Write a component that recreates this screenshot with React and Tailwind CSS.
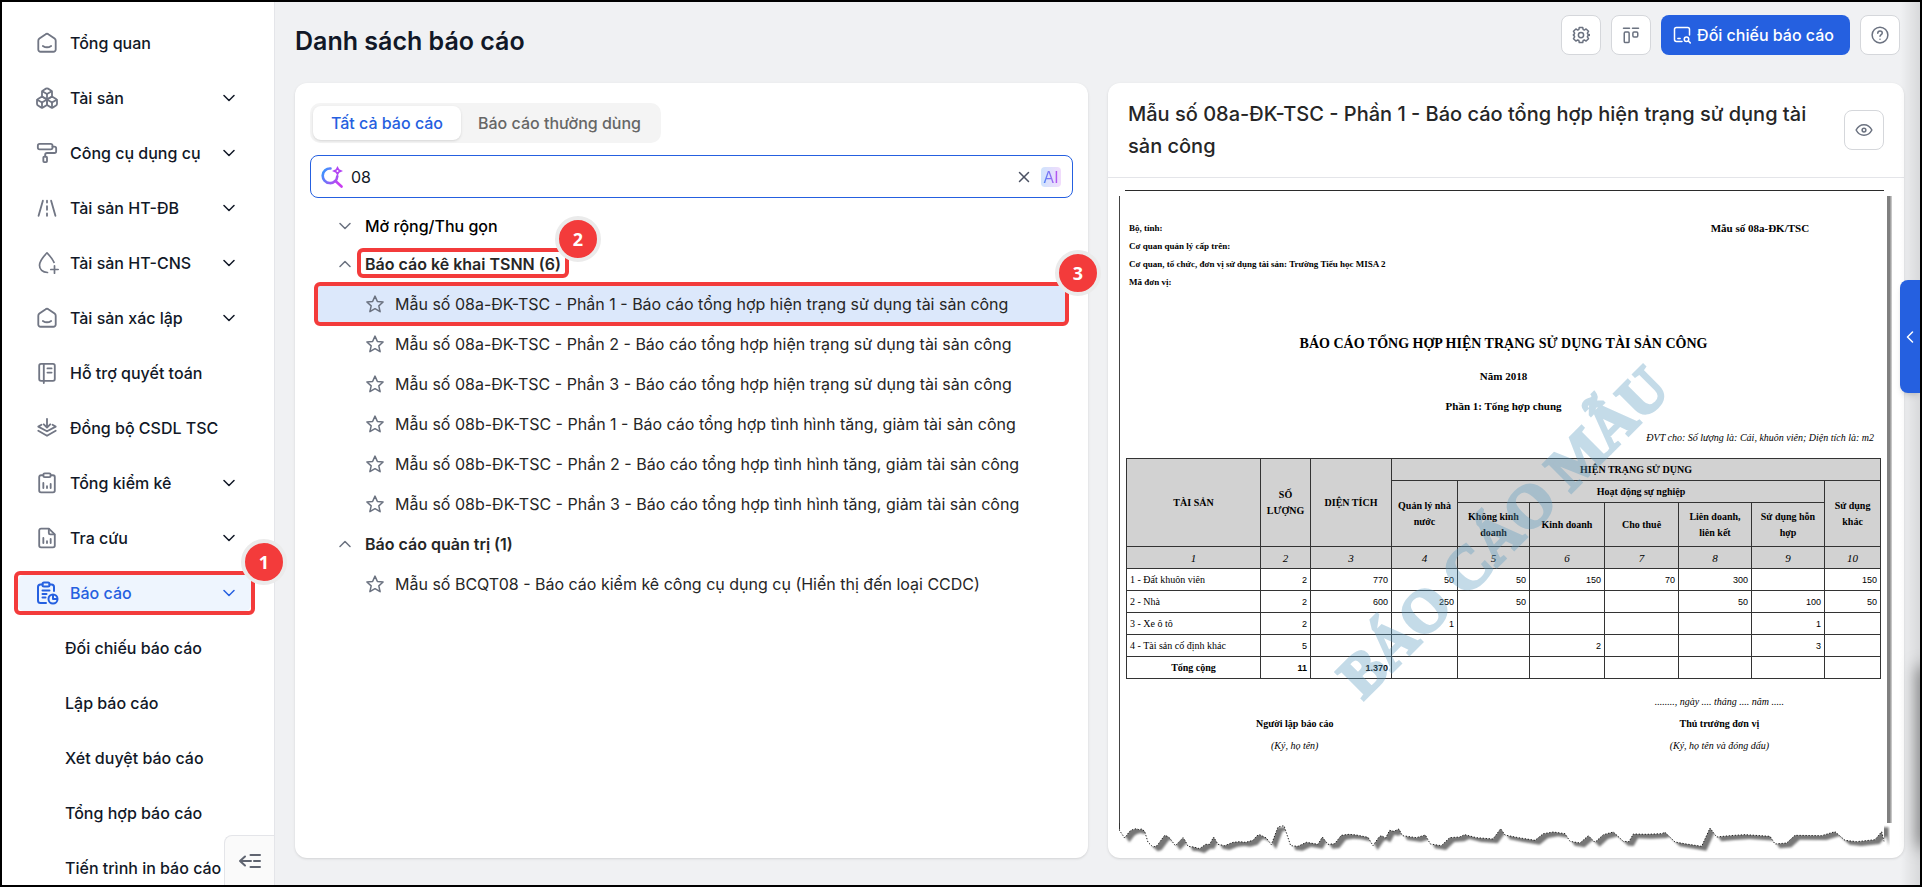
import { useState } from "react";
import { Boxes, PaintRoller, X } from "lucide-react";

const Icon = ({ size = 22, width = 1.7, children }) => (
  <svg
    width={size}
    height={size}
    viewBox="0 0 24 24"
    fill="none"
    stroke="currentColor"
    strokeWidth={width}
    strokeLinecap="round"
    strokeLinejoin="round"
    className="shrink-0"
    aria-hidden="true"
  >
    {children}
  </svg>
);

const HomeIcon = () => (
  <Icon width={2}>
    <path d="M2.5 9.6c0-1 .4-1.800 1.200-2.400l6.500-4.600a3 3 0 0 1 3.600 0l6.500 4.600c.8.600 1.200 1.400 1.200 2.400V19a2.500 2.500 0 0 1-2.500 2.500h-14A2.500 2.500 0 0 1 2.500 19z" />
    <path d="M7.500 15.200c2.600 1.700 6.400 1.700 9 0" />
  </Icon>
);

const RoadIcon = () => (
  <Icon width={2}>
    <path d="M7.500 4 2.800 20.500M16.500 4l4.700 16.500" />
    <path d="M12 4v2M12 10v4M12 18v2.500" />
  </Icon>
);

const DropPlusIcon = () => (
  <Icon size={24}>
    <path d="M12.500 21.500c-5 0-8-3-8-7.200C4.500 9.500 8.500 5.500 12 1.800c2.800 3 5.500 6 7 9.500" />
    <path d="M19.500 14.800v7.400M15.800 18.500h7.400" />
  </Icon>
);

const BookIcon = () => (
  <Icon width={2}>
    <rect x="3.500" y="2" width="17" height="18.500" rx="2" />
    <path d="M8.500 2v21M12.500 7h4.500M12.500 11.500h4.500" />
  </Icon>
);

const LayersDownIcon = () => (
  <Icon width={2}>
    <path d="M12 2v9M8.500 8l3.500 3.500L15.500 8" />
    <path d="M6 8.500 2.500 10.500 12 15.500l9.500-5L18 8.500" />
    <path d="M2.500 15l9.500 5.500 9.500-5.500" />
  </Icon>
);

const ClipboardChartIcon = () => (
  <Icon width={2}>
    <path d="M8 3.500H5.500a2 2 0 0 0-2 2v14.800a2 2 0 0 0 2 2h13a2 2 0 0 0 2-2V5.500a2 2 0 0 0-2-2H16" />
    <rect x="8" y="1.500" width="8" height="4" rx="1.500" />
    <path d="M8 12v5.500M12 15.500v2M16 13v4.500" />
  </Icon>
);

const FileChartIcon = () => (
  <Icon width={2}>
    <path d="M14 1.800H5.500a2 2 0 0 0-2 2v16.500a2 2 0 0 0 2 2h13a2 2 0 0 0 2-2V8z" />
    <path d="M14 2v4.500A1.500 1.500 0 0 0 15.500 8h4.500" />
    <path d="M8 12v5.500M12 15.500v2M16 13v4.500" />
  </Icon>
);

const ClipboardPieIcon = () => (
  <Icon size={24} width={2}>
    <path d="M7.500 3.500h-2a2.500 2.500 0 0 0-2.500 2.500v13.500A2.500 2.500 0 0 0 5.500 22H11M14.500 3.500h2A2.500 2.500 0 0 1 19 6v4" />
    <rect x="7.500" y="1.500" width="7" height="4" rx="1.500" />
    <path d="M7.500 9.500h7M7.500 13h4M7.500 16.500h3" />
    <circle cx="18" cy="18" r="4.500" />
    <path d="M18 14v4h4" />
  </Icon>
);

const Chevron = ({ up, className = "" }) => (
  <svg
    width="12"
    height="8"
    viewBox="0 0 12 8"
    fill="none"
    stroke="currentColor"
    strokeWidth="1.500"
    strokeLinecap="round"
    strokeLinejoin="round"
    className={`shrink-0 ${className}`}
    aria-hidden="true"
  >
    <path d={up ? "M1 6.500 6 1.500l5 5" : "M1 1.500l5 5 5-5"} />
  </svg>
);

const StarIcon = () => (
  <svg
    width="18"
    height="18"
    viewBox="0 0 24 24"
    fill="none"
    stroke="currentColor"
    strokeWidth="2"
    strokeLinejoin="round"
    className="shrink-0 text-[#6b7280]"
    aria-hidden="true"
  >
    <path d="M12 1.500 15.200 8.700 22.800 9.400 17.100 14.500 18.800 22.300 12 18.200 5.200 22.300 6.900 14.500 1.200 9.400 8.800 8.700z" />
  </svg>
);

const menu = [
  { label: "Tổng quan", icon: <HomeIcon /> },
  {
    label: "Tài sản",
    icon: <Boxes size={24} strokeWidth={1.8} className="-mx-px shrink-0" />,
    more: true,
  },
  {
    label: "Công cụ dụng cụ",
    icon: <PaintRoller size={22} strokeWidth={2} className="shrink-0" />,
    more: true,
  },
  { label: "Tài sản HT-ĐB", icon: <RoadIcon />, more: true },
  { label: "Tài sản HT-CNS", icon: <DropPlusIcon />, more: true },
  { label: "Tài sản xác lập", icon: <HomeIcon />, more: true },
  { label: "Hỗ trợ quyết toán", icon: <BookIcon /> },
  { label: "Đồng bộ CSDL TSC", icon: <LayersDownIcon /> },
  { label: "Tổng kiểm kê", icon: <ClipboardChartIcon />, more: true },
  { label: "Tra cứu", icon: <FileChartIcon />, more: true },
  { label: "Báo cáo", icon: <ClipboardPieIcon />, more: true, active: true },
];

const subMenu = [
  "Đối chiếu báo cáo",
  "Lập báo cáo",
  "Xét duyệt báo cáo",
  "Tổng hợp báo cáo",
  "Tiến trình in báo cáo",
];

const groups = [
  {
    title: "Báo cáo kê khai TSNN (6)",
    step: 2,
    reports: [
      "Mẫu số 08a-ĐK-TSC - Phần 1 - Báo cáo tổng hợp hiện trạng sử dụng tài sản công",
      "Mẫu số 08a-ĐK-TSC - Phần 2 - Báo cáo tổng hợp hiện trạng sử dụng tài sản công",
      "Mẫu số 08a-ĐK-TSC - Phần 3 - Báo cáo tổng hợp hiện trạng sử dụng tài sản công",
      "Mẫu số 08b-ĐK-TSC - Phần 1 - Báo cáo tổng hợp tình hình tăng, giảm tài sản công",
      "Mẫu số 08b-ĐK-TSC - Phần 2 - Báo cáo tổng hợp tình hình tăng, giảm tài sản công",
      "Mẫu số 08b-ĐK-TSC - Phần 3 - Báo cáo tổng hợp tình hình tăng, giảm tài sản công",
    ],
  },
  {
    title: "Báo cáo quản trị (1)",
    reports: [
      "Mẫu số BCQT08 - Báo cáo kiểm kê công cụ dụng cụ (Hiển thị đến loại CCDC)",
    ],
  },
];

const rows = [
  ["1 - Đất khuôn viên", "2", "770", "50", "50", "150", "70", "300", "", "150"],
  ["2 - Nhà", "2", "600", "250", "50", "", "", "50", "100", "50"],
  ["3 - Xe ô tô", "2", "", "1", "", "", "", "", "1", ""],
  ["4 - Tài sản cố định khác", "5", "", "", "", "2", "", "", "3", ""],
];

// Numbered marker: red outline with a round badge on its top right corner
const Step = ({ n, className }) => (
  <span
    className={`pointer-events-none absolute z-20 rounded-md border-4 border-[#f33b3b] ${className}`}
  >
    <span className="absolute -top-9 -right-9 flex size-[46px] items-center justify-center rounded-full border-4 border-[#ebebeb] bg-[#f33b3b] font-['Open_Sans',sans-serif] text-lg font-bold text-white">
      {n}
    </span>
  </span>
);

const Sidebar = () => (
  <aside className="relative z-10 w-[273px] shrink-0 border-r border-[#e4e5e9] bg-white">
    <nav className="pt-[13px] pr-[23px] pl-4">
      <ul>
        {menu.map((item) => (
          <li key={item.label} className="flex h-[55px] items-center">
            <button
              className={`relative flex h-9 w-full items-center rounded-md pr-4 pl-[18px] text-left font-medium ${
                item.active ? "bg-[#eef5fe] text-[#2560e0]" : ""
              }`}
            >
              <span
                className={`flex w-[22px] justify-center ${
                  item.active ? "" : "text-[#717684]"
                }`}
              >
                {item.icon}
              </span>
              <span className="ml-3 flex-1 whitespace-nowrap">
                {item.label}
              </span>
              {item.more && <Chevron />}
              {item.active && <Step n={1} className="-inset-1" />}
            </button>
          </li>
        ))}
        {subMenu.map((label) => (
          <li key={label} className="flex h-[55px] items-center">
            <a href="#" className="pl-[47px] font-medium whitespace-nowrap">
              {label}
            </a>
          </li>
        ))}
      </ul>
    </nav>
    <button
      aria-label="Thu gọn menu"
      className="absolute right-0 bottom-0 flex size-[50px] items-center justify-center rounded-tl-lg border-t border-l border-[#e4e5e9] bg-[#fafafa] text-[#5f6470]"
    >
      <Icon size={24} width={2}>
        <path d="M7 7.500 2 12l5 4.500M2 12h11" />
        <path d="M12.500 6h9.500M16 12h6M12.500 18h9.500" />
      </Icon>
    </button>
  </aside>
);

const IconButton = ({ label, children }) => (
  <button
    aria-label={label}
    className="flex size-10 shrink-0 items-center justify-center rounded-lg border border-[#d5d7db] bg-white text-[#6b7280]"
  >
    {children}
  </button>
);

const Header = () => (
  <header className="flex h-[81px] items-start justify-between pt-[13px] pr-1">
    <h1 className="text-[25px] leading-[52px] font-semibold">
      Danh sách báo cáo
    </h1>
    <div className="flex gap-[10px]">
      <IconButton label="Thiết lập">
        <Icon size={18} width={2}>
          <path d="M9.700 2h4.600l.6 2.800 1.500.6 2.400-1.500 3.200 3.200-1.500 2.400.6 1.500 2.800.6v.8l-2.800.6-.6 1.500 1.500 2.400-3.200 3.200-2.400-1.500-1.500.6-.6 2.800H9.700l-.6-2.800-1.500-.6-2.400 1.500L2 16.900l1.500-2.400-.6-1.500-1-.6v-.8l1-.6.6-1.500L2 7.100l3.200-3.200 2.400 1.500 1.500-.6z" />
          <circle cx="12" cy="12" r="3.500" />
        </Icon>
      </IconButton>
      <IconButton label="Bố cục">
        <Icon size={18} width={2}>
          <path d="M2 3h8M14 3h8" />
          <rect x="3" y="8" width="6.500" height="14" rx="1.500" />
          <rect x="14.500" y="8" width="6.500" height="6.500" rx="1.500" />
        </Icon>
      </IconButton>
      <button className="flex h-10 items-center gap-1.5 rounded-lg bg-[#2560e0] pr-4 pl-3 font-medium text-white">
        <Icon size={18} width={2}>
          <path d="M12 20.500H4.500a2.500 2.500 0 0 1-2.500-2.500V4.500A2.500 2.500 0 0 1 4.500 2h15A2.500 2.500 0 0 1 22 4.500V12M6.500 16.500h3" />
          <circle cx="18" cy="17.500" r="3" />
          <path d="m20.500 20 2.500 2.500" />
        </Icon>
        Đối chiếu báo cáo
      </button>
      <IconButton label="Trợ giúp">
        <Icon size={18} width={2}>
          <circle cx="12" cy="12" r="10.500" />
          <path d="M9 9.500c0-2 1.300-3 3-3s3 1.100 3 2.700c0 2.200-3 2.200-3 4.600M12 17.500v.1" />
        </Icon>
      </IconButton>
    </div>
  </header>
);

const SearchBox = ({ value, onChange }) => (
  <div className="mt-3 flex h-[43px] items-center rounded-lg border border-[#2560e0] pr-[11px] pl-[10px]">
    <svg width="22" height="22" viewBox="0 0 22 22" fill="none" aria-hidden="true">
      <defs>
        <linearGradient id="searchStroke" x1="0" y1="0" x2="1" y2="0.600">
          <stop offset="0" stopColor="#2f9bff" />
          <stop offset="1" stopColor="#c93df0" />
        </linearGradient>
      </defs>
      <path
        d="M9.500 2.500a7.300 7.300 0 1 0 6.800 7.700M14.500 15l6 5.500"
        stroke="url(#searchStroke)"
        strokeWidth="2.600"
        strokeLinecap="round"
      />
      <path
        d="M16.500 0 18.200 3.300l3.800 1.700-3.800 1.700-1.700 3.300-1.700-3.300L11 5l3.800-1.700z"
        fill="#b445f3"
      />
      <circle cx="16.500" cy="5" r="1" fill="#fff" />
    </svg>
    <input
      aria-label="Tìm kiếm báo cáo"
      value={value}
      onChange={(e) => onChange(e.target.value)}
      className="ml-2 min-w-0 flex-1 outline-none"
    />
    <button aria-label="Xóa" onClick={() => onChange("")} className="mr-2">
      <X size={18} strokeWidth={2} className="text-[#4b5263]" />
    </button>
    <button className="h-5 w-5 rounded-sm bg-gradient-to-r from-[#cfe3fd] to-[#f1dcfc] text-base leading-5">
      <span className="bg-gradient-to-r from-[#3b82f6] to-[#c04af0] bg-clip-text text-transparent">
        AI
      </span>
    </button>
  </div>
);

const ReportList = () => {
  const [search, setSearch] = useState("08");

  return (
    <section className="min-w-0 rounded-xl bg-white px-[15px] pt-5 shadow-sm">
      <div className="flex h-10 w-fit rounded-[10px] bg-[#f4f4f4] p-[3px]">
        <button className="rounded-lg bg-white px-[18px] font-medium text-[#2560e0] shadow-sm">
          Tất cả báo cáo
        </button>
        <button className="px-[17px] font-medium text-[#666]">
          Báo cáo thường dùng
        </button>
      </div>
      <SearchBox value={search} onChange={setSearch} />
      <div className="px-2 pt-[9px]">
        <button className="flex h-[37px] items-center gap-[14px] pl-[21px] font-medium text-black">
          <Chevron className="text-[#6b7280]" />
          Mở rộng/Thu gọn
        </button>
        {groups.map((group) => (
          <div key={group.title}>
            <button className="flex h-10 items-center gap-[14px] pl-[21px] font-semibold text-[#262626]">
              <Chevron up className="text-[#6b7280]" />
              <span className="relative">
                {group.title}
                {group.step && (
                  <Step n={group.step} className="-inset-x-2 -top-1 h-[30px]" />
                )}
              </span>
            </button>
            <ul>
              {group.reports.map((name) => {
                const selected = name === groups[0].reports[0];
                return (
                  <li key={name} className="flex h-10 items-center">
                    <button
                      className={`relative flex h-9 w-full items-center gap-[11px] pl-12 text-left whitespace-nowrap text-[#262626] ${
                        selected ? "bg-[#dce8fb]" : ""
                      }`}
                    >
                      <StarIcon />
                      {name}
                      {selected && <Step n={3} className="-inset-1" />}
                    </button>
                  </li>
                );
              })}
            </ul>
          </div>
        ))}
      </div>
    </section>
  );
};

const ReportTable = () => (
  <table className="w-full table-fixed border-collapse text-[10px] leading-4 [&_td]:border [&_td]:border-[#333] [&_td]:px-[3px] [&_td]:py-0 [&_th]:border [&_th]:border-[#333] [&_th]:p-0">
    <colgroup>
      <col className="w-[134px]" />
      <col className="w-[50px]" />
      <col className="w-[81px]" />
      <col className="w-[66px]" />
      <col className="w-[72px]" />
      <col className="w-[75px]" />
      <col className="w-[74px]" />
      <col className="w-[73px]" />
      <col className="w-[73px]" />
      <col className="w-[56px]" />
    </colgroup>
    <thead className="bg-[#d2d2d2]">
      <tr className="h-[22px]">
        <th rowSpan={3}>TÀI SẢN</th>
        <th rowSpan={3}>
          SỐ
          <br />
          LƯỢNG
        </th>
        <th rowSpan={3}>DIỆN TÍCH</th>
        <th colSpan={7}>HIỆN TRẠNG SỬ DỤNG</th>
      </tr>
      <tr className="h-[22px]">
        <th rowSpan={2}>
          Quản lý nhà
          <br />
          nước
        </th>
        <th colSpan={5}>Hoạt động sự nghiệp</th>
        <th rowSpan={2}>
          Sử dụng
          <br />
          khác
        </th>
      </tr>
      <tr className="h-11">
        <th>
          Không kinh
          <br />
          doanh
        </th>
        <th>Kinh doanh</th>
        <th>Cho thuê</th>
        <th>
          Liên doanh,
          <br />
          liên kết
        </th>
        <th>
          Sử dụng hỗn
          <br />
          hợp
        </th>
      </tr>
      <tr className="h-[22px] text-[11px] italic">
        {[1, 2, 3, 4, 5, 6, 7, 8, 9, 10].map((n) => (
          <td key={n} className="text-center">
            {n}
          </td>
        ))}
      </tr>
    </thead>
    <tbody>
      {rows.map(([name, ...values]) => (
        <tr key={name} className="h-[22px]">
          <td>{name}</td>
          {values.map((value, i) => (
            <td
              key={i}
              className="text-right font-['Liberation_Sans',sans-serif] text-[9px]"
            >
              {value}
            </td>
          ))}
        </tr>
      ))}
      <tr className="h-[22px] font-bold">
        <td className="text-center">Tổng cộng</td>
        {["11", "1.370", "", "", "", "", "", "", ""].map((value, i) => (
          <td
            key={i}
            className="text-right font-['Liberation_Sans',sans-serif] text-[9px]"
          >
            {value}
          </td>
        ))}
      </tr>
    </tbody>
  </table>
);

// Ragged lower edge of the sample sheet
const tear =
  "38,60 55,85 70,65 78,60 90,57 98,60 106,58 115,65 125,98 140,112 152,108 175,77 183,80 190,85 207,108 230,84 236,92 245,110 262,112 280,117 298,104 310,104 322,82 335,104 355,108 380,98 400,96 418,98 440,92 452,78 460,75 480,85 495,105 515,52 533,48 553,108 575,110 600,98 635,104 648,82 665,104 685,102 705,77 728,74 750,76 785,83 800,108 818,82 825,78 838,85 850,62 862,65 878,58 888,78 930,84 957,76 972,103 1005,108 1030,84 1060,82 1075,75 1110,84 1160,88 1183,57 1196,76 1236,84 1286,92 1311,72 1341,67 1376,72 1391,95 1421,100 1446,78 1466,98 1491,75 1521,67 1551,95 1568,96 1581,73 1620,74 1666,72 1676,68 1706,97 1740,103 1786,110 1811,55 1831,82 1870,78 1916,75 1991,80 2006,103 2041,100 2066,77 2146,78 2186,66 2216,92 2251,96 2306,90 2326,66 2333,95";

const TornEdge = () => (
  <svg
    viewBox="38 40 2313 96"
    preserveAspectRatio="none"
    className="block h-8 w-full shrink-0"
    aria-hidden="true"
  >
    <defs>
      <filter id="tearBlur" x="-2%" y="-20%" width="104%" height="140%">
        <feGaussianBlur stdDeviation="3" />
      </filter>
    </defs>
    <polygon
      points={`38,40 ${tear} 2333,40`}
      fill="#777"
      transform="translate(14 13)"
      filter="url(#tearBlur)"
    />
    <polygon points={`38,0 ${tear} 2333,0`} fill="#fff" />
    <polyline
      points={tear}
      fill="none"
      stroke="#222"
      strokeWidth="3"
      strokeDasharray="4 5"
    />
    <path d="M39.500 40v20" stroke="#333" strokeWidth="3" />
  </svg>
);

const SampleSheet = () => (
  <div className="flex flex-1 flex-col pt-3 pr-[14px] pb-[3px] pl-[11px] font-['Liberation_Serif',serif] text-black">
    <div className="mx-1.5 h-px bg-[#2b2b2b]" />
    <div className="mt-[5px] flex flex-1">
      <div className="relative flex-1 border-l border-[#444] px-1.5">
        <div className="flex justify-between pt-[23px] pr-[72px] pl-[3px] font-bold">
          <div className="text-[9px] leading-[18px]">
            <p>Bộ, tỉnh:</p>
            <p>Cơ quan quản lý cấp trên:</p>
            <p>Cơ quan, tổ chức, đơn vị sử dụng tài sản: Trường Tiểu học MISA 2</p>
            <p>Mã đơn vị:</p>
          </div>
          <p className="text-[11px] leading-[18px]">Mẫu số 08a-ĐK/TSC</p>
        </div>
        <div className="pt-[33px] text-center font-bold">
          <h3 className="text-sm leading-10">
            BÁO CÁO TỔNG HỢP HIỆN TRẠNG SỬ DỤNG TÀI SẢN CÔNG
          </h3>
          <p className="text-[11px] leading-6">Năm 2018</p>
          <p className="pt-1.5 text-[11px] leading-6">
            Phần 1: Tổng hợp chung
          </p>
        </div>
        <p className="pt-2 pr-[7px] pb-2 text-right text-[10px] leading-6 italic">
          ĐVT cho: Số lượng là: Cái, khuôn viên; Diện tích là: m2
        </p>
        <ReportTable />
        <div className="flex items-end justify-between pt-3 pr-[97px] pl-[130px] text-center text-[10px] leading-[22px]">
          <div>
            <p className="font-bold">Người lập báo cáo</p>
            <p className="italic">(Ký, họ tên)</p>
          </div>
          <div>
            <p className="italic">........, ngày .... tháng .... năm .....</p>
            <p className="font-bold">Thủ trưởng đơn vị</p>
            <p className="italic">(Ký, họ tên và đóng dấu)</p>
          </div>
        </div>
        <div className="pointer-events-none absolute inset-x-0 top-[296px] flex h-20 items-center justify-center">
          <span className="-rotate-45 text-[60px] font-bold whitespace-nowrap text-[#5a9abf] opacity-35 [-webkit-text-stroke:3px_#5a9abf]">
            BÁO CÁO MẪU
          </span>
        </div>
      </div>
      <div className="w-[5px] shrink-0 bg-gradient-to-r from-[#808080] from-50% to-[#d8d8d8]" />
    </div>
    <TornEdge />
  </div>
);

const ReportPreview = () => (
  <section className="flex min-w-0 flex-col overflow-hidden rounded-xl bg-white shadow-sm">
    <div className="flex items-center gap-4 border-b border-[#e4e5e9] px-5 py-[15px]">
      <h2 className="flex-1 text-xl leading-8 font-medium text-[#262626]">
        Mẫu số 08a-ĐK-TSC - Phần 1 - Báo cáo tổng hợp hiện trạng sử dụng tài sản
        công
      </h2>
      <IconButton label="Xem trước">
        <Icon size={18} width={2}>
          <path d="M1.500 12C4 7.200 7.700 5 12 5s8 2.200 10.500 7c-2.500 4.800-6.200 7-10.500 7S4 16.800 1.500 12z" />
          <circle cx="12" cy="12" r="2.500" />
        </Icon>
      </IconButton>
    </div>
    <SampleSheet />
  </section>
);

const App = () => {
  return (
    <div className="relative flex h-screen overflow-hidden border-2 border-black bg-[#f0f1f3] font-['Inter',sans-serif] text-base text-[#111827]">
      <Sidebar />
      <main className="flex min-w-0 flex-1 flex-col pr-4 pb-[27px] pl-5">
        <Header />
        <div className="grid flex-1 grid-cols-[793fr_796fr] gap-5">
          <ReportList />
          <ReportPreview />
        </div>
      </main>
      <div className="pointer-events-none absolute inset-y-0 right-0 w-5 bg-gradient-to-r from-transparent to-black/10" />
      <div className="pointer-events-none absolute -right-2 bottom-10 h-44 w-2 shadow-[0_0_16px_2px_rgba(0,0,0,0.5)]" />
      <button
        aria-label="Mở bảng bên"
        className="absolute top-[278px] right-0 flex h-[113px] w-5 items-center justify-center rounded-l-lg bg-[#2560e0] text-white shadow-md"
      >
        <Chevron className="rotate-90" />
      </button>
    </div>
  );
};

export default App;
